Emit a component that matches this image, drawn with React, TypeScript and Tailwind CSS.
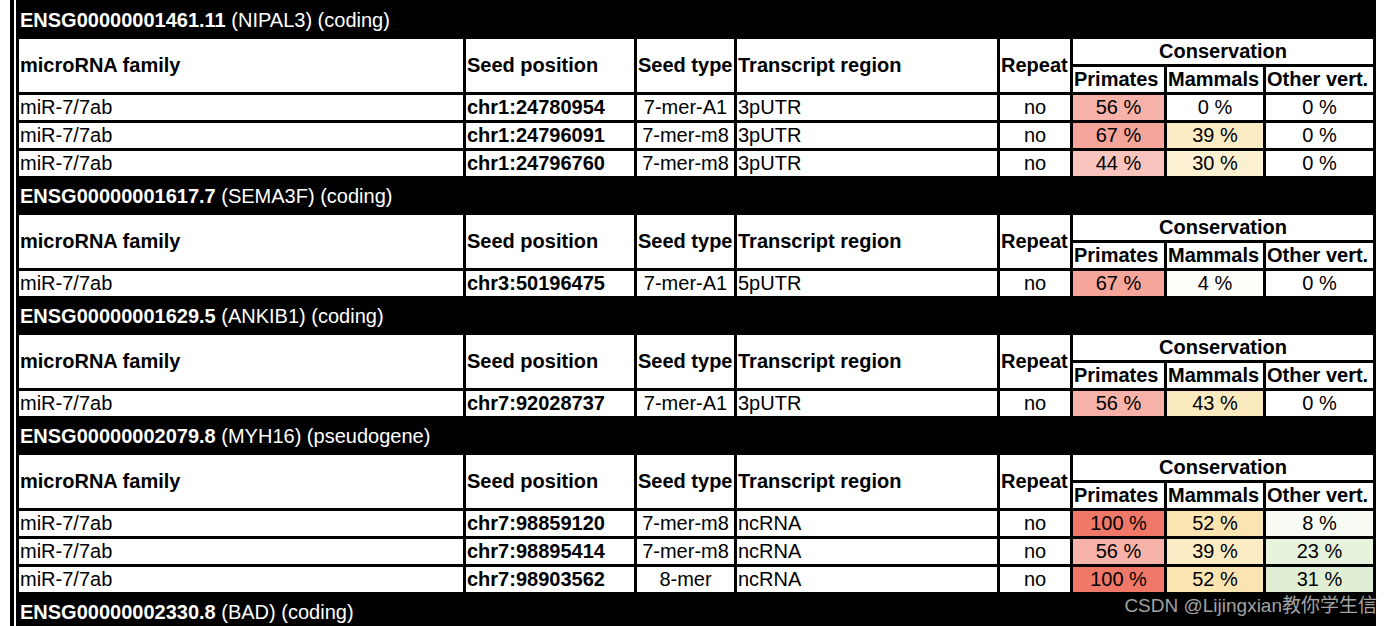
import type { CSSProperties } from 'react'

type Site = {
  pos: string
  seed: string
  region: string
  primates: number
  mammals: number
  other: number
}

type Gene = {
  id: string
  symbol: string
  kind: string
  sites: Site[]
}

const FAMILY = 'miR-7/7ab'

const GENES: Gene[] = [
  {
    id: 'ENSG00000001461.11',
    symbol: 'NIPAL3',
    kind: 'coding',
    sites: [
      { pos: 'chr1:24780954', seed: '7-mer-A1', region: '3pUTR', primates: 56, mammals: 0, other: 0 },
      { pos: 'chr1:24796091', seed: '7-mer-m8', region: '3pUTR', primates: 67, mammals: 39, other: 0 },
      { pos: 'chr1:24796760', seed: '7-mer-m8', region: '3pUTR', primates: 44, mammals: 30, other: 0 },
    ],
  },
  {
    id: 'ENSG00000001617.7',
    symbol: 'SEMA3F',
    kind: 'coding',
    sites: [
      { pos: 'chr3:50196475', seed: '7-mer-A1', region: '5pUTR', primates: 67, mammals: 4, other: 0 },
    ],
  },
  {
    id: 'ENSG00000001629.5',
    symbol: 'ANKIB1',
    kind: 'coding',
    sites: [
      { pos: 'chr7:92028737', seed: '7-mer-A1', region: '3pUTR', primates: 56, mammals: 43, other: 0 },
    ],
  },
  {
    id: 'ENSG00000002079.8',
    symbol: 'MYH16',
    kind: 'pseudogene',
    sites: [
      { pos: 'chr7:98859120', seed: '7-mer-m8', region: 'ncRNA', primates: 100, mammals: 52, other: 8 },
      { pos: 'chr7:98895414', seed: '7-mer-m8', region: 'ncRNA', primates: 56, mammals: 39, other: 23 },
      { pos: 'chr7:98903562', seed: '8-mer', region: 'ncRNA', primates: 100, mammals: 52, other: 31 },
    ],
  },
  { id: 'ENSG00000002330.8', symbol: 'BAD', kind: 'coding', sites: [] },
]

// full-strength colour for 100 %, blended towards white by the percentage
const PRIMATES_RGB = [240, 120, 104]
const MAMMALS_RGB = [246, 205, 107]
const OTHER_RGB = [155, 203, 113]

function heat(pct: number, rgb: number[]): CSSProperties {
  const t = pct / 100
  const [r, g, b] = rgb.map((c) => Math.round(255 - t * (255 - c)))
  return { backgroundColor: `rgb(${r}, ${g}, ${b})` }
}

const td = 'bg-white h-[25px] px-px py-px leading-[23px] whitespace-nowrap overflow-hidden'
const th = 'bg-white h-[25px] px-px py-px leading-[23px] font-bold whitespace-nowrap overflow-hidden'

function GeneBlock({ gene }: { gene: Gene }) {
  return (
    <>
      <tr>
        <td colSpan={8} className="h-[33px] px-px pt-[2px] text-white leading-[23px] whitespace-nowrap">
          <span className="font-bold">{gene.id}</span> ({gene.symbol}) ({gene.kind})
        </td>
      </tr>
      {gene.sites.length > 0 && (
        <>
          <tr>
            <th rowSpan={2} className={`${th} text-left`}>microRNA family</th>
            <th rowSpan={2} className={`${th} text-left`}>Seed position</th>
            <th rowSpan={2} className={`${th} text-left`}>Seed type</th>
            <th rowSpan={2} className={`${th} text-left`}>Transcript region</th>
            <th rowSpan={2} className={`${th} text-left`}>Repeat</th>
            <th colSpan={3} className={`${th} text-center`}>Conservation</th>
          </tr>
          <tr>
            <th className={`${th} text-left`}>Primates</th>
            <th className={`${th} text-left`}>Mammals</th>
            <th className={`${th} text-left`}>Other vert.</th>
          </tr>
          {gene.sites.map((s) => (
            <tr key={s.pos}>
              <td className={td}>{FAMILY}</td>
              <td className={`${td} font-bold`}>{s.pos}</td>
              <td className={`${td} text-center`}>{s.seed}</td>
              <td className={td}>{s.region}</td>
              <td className={`${td} text-center`}>no</td>
              <td className={`${td} text-center`} style={heat(s.primates, PRIMATES_RGB)}>{s.primates} %</td>
              <td className={`${td} text-center`} style={heat(s.mammals, MAMMALS_RGB)}>{s.mammals} %</td>
              <td className={`${td} text-center`} style={heat(s.other, OTHER_RGB)}>{s.other} %</td>
            </tr>
          ))}
        </>
      )}
    </>
  )
}

export default function App() {
  return (
    <div className="relative min-h-screen bg-white pl-[10px] font-['Liberation_Sans',Arial,sans-serif] text-[20px] text-black">
      <div className="border-l-4 border-black pl-[2px]">
        <table className="table-fixed w-[1360px] border-separate border-spacing-[3px] bg-black">
          <colgroup>
            <col className="w-[444px]" />
            <col className="w-[168px]" />
            <col className="w-[97px]" />
            <col className="w-[260px]" />
            <col className="w-[70px]" />
            <col className="w-[91px]" />
            <col className="w-[96px]" />
            <col className="w-[107px]" />
          </colgroup>
          <tbody>
            {GENES.map((g) => (
              <GeneBlock key={g.id} gene={g} />
            ))}
          </tbody>
        </table>
      </div>
      <div className="absolute right-[17px] top-[595px] text-[19px] leading-[22px] text-[#a3a3a3] font-['Liberation_Sans','Noto_Sans_CJK_SC',sans-serif]">
        CSDN @Lijingxian教你学生信
      </div>
    </div>
  )
}
